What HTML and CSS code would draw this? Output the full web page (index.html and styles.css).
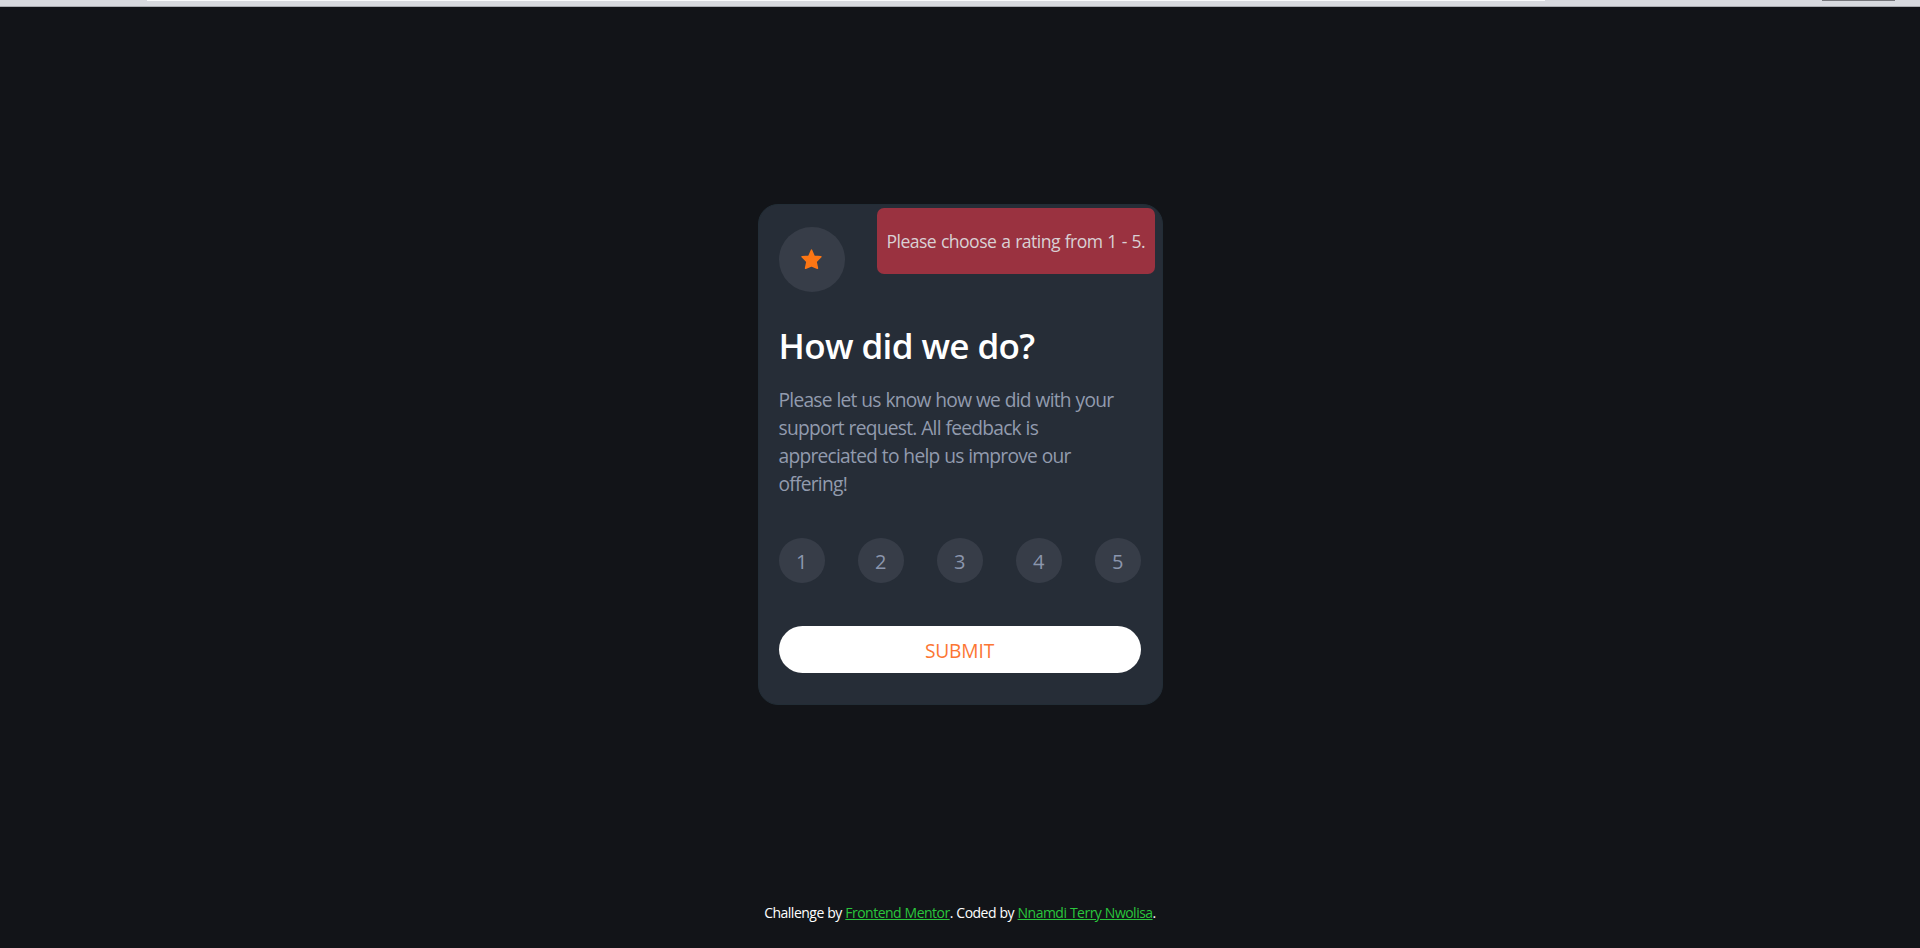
FILE: index.html
```html
<!DOCTYPE html>
<html lang="en">
<head>
<meta charset="utf-8">
<title>Interactive rating component</title>
<link rel="stylesheet" href="styles.css">
</head>
<body>
<div class="chrome"><span class="chrome-field"></span><span class="chrome-pill"></span></div>
<main class="stage">
  <section class="card">
    <div class="toast"><span>Please choose a rating from 1 - 5.</span></div>
    <div class="icon">
      <svg width="22" height="21" viewBox="0 0 22 21"><path d="M10.5 1.2 13.1 7.2 19.9 7.8 15 12.6 16.4 19.2 10.5 16.7 4.6 19.2 6 12.6 1.1 7.8 7.9 7.2Z" fill="#fc7614" stroke="#fc7614" stroke-width="1.6" stroke-linejoin="round"/></svg>
    </div>
    <h1 class="title"><span>How did we do?</span></h1>
    <p class="text"><span>Please let us know how we did with your</span><br><span>support request. All feedback is</span><br><span>appreciated to help us improve our</span><br><span>offering!</span></p>
    <div class="ratings">
      <button class="rate">1</button><button class="rate">2</button><button class="rate">3</button><button class="rate">4</button><button class="rate">5</button>
    </div>
    <button class="submit"><span>SUBMIT</span></button>
  </section>
</main>
<footer class="footer"><span>Challenge by <a href="#">Frontend Mentor</a>. Coded by <a href="#">Nnamdi Terry Nwolisa</a>.</span></footer>
</body>
</html>
```
FILE: styles.css
```css
* { box-sizing: border-box; }
body {
  margin: 0;
  height: 948px;
  overflow: hidden;
  display: flex;
  flex-direction: column;
  background: #121418;
  font-family: "Segoe UI", "Open Sans", "Noto Sans", sans-serif;
}
.chrome {
  flex: none;
  height: 7px;
  padding: 0 25px 0 147px;
  display: flex;
  justify-content: space-between;
  background: #d8dadf;
  border-bottom: 1px solid #a9abb0;
}
.chrome-field { width: 1398px; height: 1px; background: #fafbfc; }
.chrome-pill { width: 73px; height: 1px; background: #77787c; }
.stage { flex: 1; display: flex; justify-content: center; align-items: flex-start; padding-top: 197px; }
.card {
  position: relative;
  width: 405px;
  height: 501px;
  padding: 22px 20px 0;
  border: 1px solid #222d36;
  border-radius: 20px;
  background: #262d37;
}
.toast {
  position: absolute;
  top: 3px;
  right: 7px;
  width: 278px;
  height: 66px;
  padding-left: 10px;
  display: flex;
  align-items: center;
  border-radius: 7px;
  background: #9a3240;
  color: #d9d0d4;
  font-size: 17.6px;
  letter-spacing: -0.55px;
  word-spacing: 0.8px;
  white-space: nowrap;
}
.icon {
  width: 66px;
  height: 65px;
  display: grid;
  place-items: center;
  border-radius: 50%;
  background: #373d48;
}
.title { margin: 30px 0 0; font-size: 35px; line-height: 48px; font-weight: 600; color: #fff; letter-spacing: -0.6px; white-space: nowrap; }
.text { margin: 16px 0 0; font-size: 19.2px; line-height: 28px; color: #929bae; letter-spacing: -0.74px; word-spacing: 0.4px; white-space: nowrap; }
.ratings { width: 362.5px; margin-top: 40px; display: flex; justify-content: space-between; }
.rate {
  width: 46.5px;
  height: 45px;
  padding: 1px 0 0;
  border: 0;
  border-radius: 50%;
  background: #373d48;
  color: #8b96ad;
  font: 20px "Segoe UI", "Open Sans", "Noto Sans", sans-serif;
}
.submit {
  width: 362px;
  height: 47px;
  margin-top: 43px;
  padding: 1px 0 0;
  display: block;
  border: 0;
  border-radius: 24px;
  background: #fff;
  color: #fc7633;
  font: 19.2px "Segoe UI", "Open Sans", "Noto Sans", sans-serif;
  letter-spacing: -0.15px;
}
.footer { flex: none; height: 45px; text-align: center; font-size: 14px; line-height: 20px; color: #fff; letter-spacing: -0.52px; word-spacing: 0.4px; }
.footer a { color: #2ac63c; }
```
